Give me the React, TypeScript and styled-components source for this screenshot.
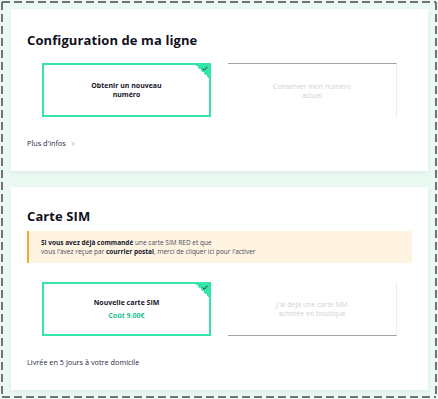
import React from "react";
import styled, { createGlobalStyle } from "styled-components";

const GlobalStyle = createGlobalStyle`
  html, body {
    margin: 0;
    padding: 0;
    background: #ffffff;
  }
  * {
    box-sizing: border-box;
  }
`;

const dash = "#727272";

const Page = styled.div`
  width: 438px;
  height: 399px;
  padding: 9px 10px 0 11px;
  display: flex;
  flex-direction: column;
  gap: 16px;
  font-family: "Open Sans", "Liberation Sans", sans-serif;
  color: #16162a;
  background:
    repeating-linear-gradient(90deg, ${dash} 0 8px, transparent 8px 12px) 2px 1px / calc(100% - 4px) 2px no-repeat,
    repeating-linear-gradient(90deg, ${dash} 0 8px, transparent 8px 12px) 2px calc(100% - 1px) / calc(100% - 4px) 2px no-repeat,
    repeating-linear-gradient(180deg, ${dash} 0 8px, transparent 8px 12px) 1px 2px / 2px calc(100% - 4px) no-repeat,
    repeating-linear-gradient(180deg, ${dash} 0 8px, transparent 8px 12px) calc(100% - 1px) 2px / 2px calc(100% - 4px) no-repeat,
    #eafaf3;
`;

const Section = styled.section<{ top: number }>`
  background: #ffffff;
  box-shadow: 0 2px 5px rgba(0, 0, 0, 0.06);
  padding: ${({ top }) => top}px 16px 22px 16px;
`;

const Title = styled.h2`
  margin: 0;
  font-size: 13px;
  line-height: 18px;
  font-weight: 700;
  letter-spacing: 0.1px;
  color: #111122;
`;

const Options = styled.div<{ mt: number }>`
  display: flex;
  gap: 17px;
  margin-top: ${({ mt }) => mt}px;
  padding-left: 15px;
`;

const Option = styled.div`
  position: relative;
  width: 169px;
  height: 54px;
  display: flex;
  flex-direction: column;
  align-items: center;
  justify-content: center;
  text-align: center;
`;

const SelectedOption = styled(Option)`
  border: 2px solid #35e5a7;
`;

const IdleOption = styled(Option)<{ edge: "top" | "bottom" }>`
  border-right: 1px solid #ececec;
  ${({ edge }) => (edge === "top" ? "border-top" : "border-bottom")}: 1px solid #a4a4a4;
`;

const OptionLabel = styled.div<{ muted?: boolean }>`
  font-size: 7px;
  line-height: 9px;
  font-weight: ${({ muted }) => (muted ? 400 : 700)};
  color: ${({ muted }) => (muted ? "#d2d2d2" : "#16162a")};
  max-width: 86px;
`;

const Price = styled.div`
  margin-top: 4px;
  font-size: 7px;
  line-height: 9px;
  font-weight: 700;
  color: #1fc48d;
`;

const Corner = styled.div`
  position: absolute;
  top: 0;
  right: 0;
  width: 13px;
  height: 13px;
  background: linear-gradient(45deg, transparent 50%, #35e5a7 50%);
  svg {
    position: absolute;
    top: 1px;
    right: 1px;
  }
`;

const Note = styled.div<{ mt: number }>`
  margin-top: ${({ mt }) => mt}px;
  font-size: 7.3px;
  line-height: 12px;
  color: #2a2a44;
  display: flex;
  align-items: center;
  gap: 6px;
`;

const Chevron = styled.span`
  color: #9b9ad8;
  font-size: 9px;
  line-height: 12px;
`;

const Alert = styled.div`
  margin-top: 6px;
  background: #fff4e2;
  border-left: 2px solid #f7a531;
  padding: 7px 12px;
  font-size: 6.5px;
  line-height: 9px;
  color: #4a4a5a;
  b {
    color: #16162a;
    font-weight: 700;
  }
`;

const Check = () => (
  <svg width="6" height="5" viewBox="0 0 6 5">
    <path d="M0.6 2.6 L2.3 4.1 L5.4 0.8" fill="none" stroke="#1a2a2a" strokeWidth="0.9" />
  </svg>
);

export default function App() {
  return (
    <>
      <GlobalStyle />
      <Page>
        <Section top={22}>
          <Title>Configuration de ma ligne</Title>
          <Options mt={14}>
            <SelectedOption>
              <Corner>
                <Check />
              </Corner>
              <OptionLabel>Obtenir un nouveau numéro</OptionLabel>
            </SelectedOption>
            <IdleOption edge="top">
              <OptionLabel muted>Conserver mon numéro actuel</OptionLabel>
            </IdleOption>
          </Options>
          <Note mt={20}>
            Plus d'infos <Chevron>›</Chevron>
          </Note>
        </Section>
        <Section top={20}>
          <Title>Carte SIM</Title>
          <Alert>
            <b>Si vous avez déjà commandé</b> une carte SIM RED et que
            <br />
            vous l'avez reçue par <b>courrier postal</b>, merci de cliquer ici
            pour l'activer
          </Alert>
          <Options mt={19}>
            <SelectedOption>
              <Corner>
                <Check />
              </Corner>
              <OptionLabel>Nouvelle carte SIM</OptionLabel>
              <Price>Coût 9.00€</Price>
            </SelectedOption>
            <IdleOption edge="bottom">
              <OptionLabel muted>J'ai déjà une carte SIM achetée en boutique</OptionLabel>
            </IdleOption>
          </Options>
          <Note mt={20}>Livrée en 5 jours à votre domicile</Note>
        </Section>
      </Page>
    </>
  );
}
